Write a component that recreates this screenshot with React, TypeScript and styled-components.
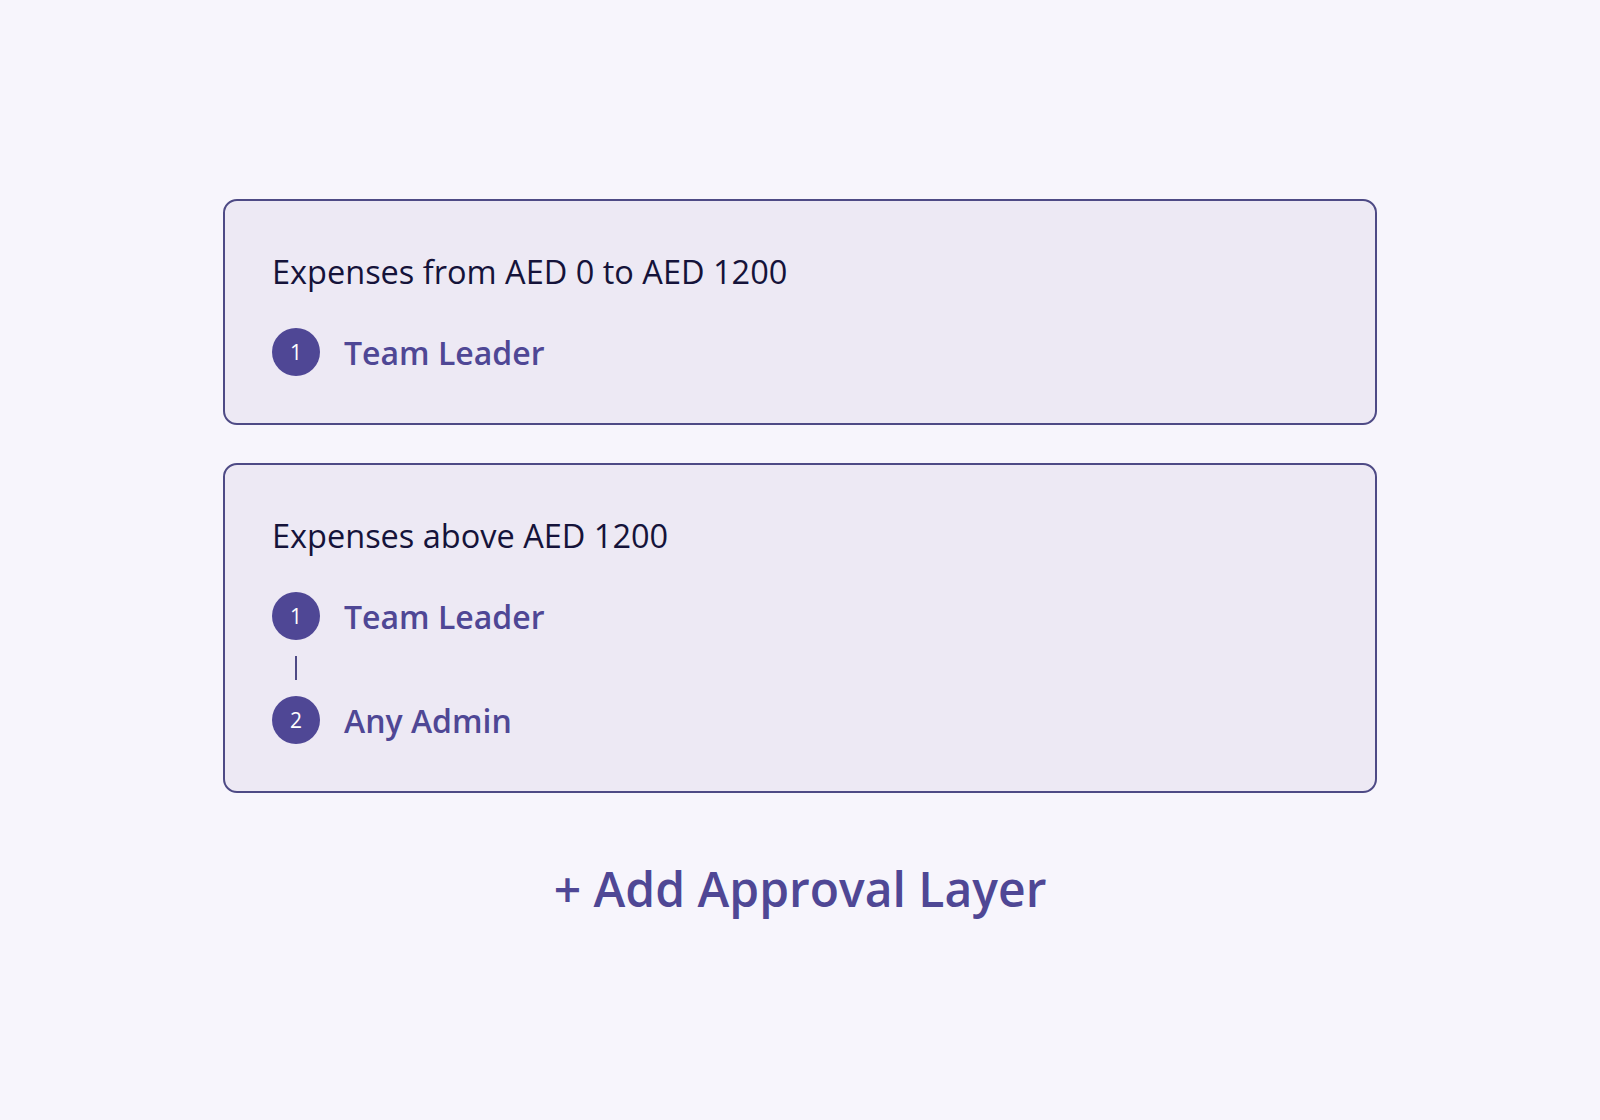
import styled, { createGlobalStyle } from "styled-components";

const GlobalStyle = createGlobalStyle`
	html, body {
		margin: 0;
		padding: 0;
		background: #f7f5fc;
	}

	body {
		font-family: "Open Sans", "Noto Sans", sans-serif;
	}
`;

const Page = styled.div`
	align-items: center;
	box-sizing: border-box;
	display: flex;
	flex-direction: column;
	min-height: 1120px;
	padding-top: 199px;
`;

const LayerList = styled.div`
	display: flex;
	flex-direction: column;
	gap: 38px;
	width: 1154px;
`;

const LayerCard = styled.div`
	background: #ede9f4;
	border: 2px solid #4e4a85;
	border-radius: 14px;
	box-sizing: border-box;
	display: flex;
	flex-direction: column;
	gap: 32px;
	padding: 47px 47px;
`;

const LayerTitle = styled.h3`
	color: #15133a;
	font-size: 32.5px;
	font-weight: 400;
	line-height: 48px;
	margin: 0;
`;

const Steps = styled.ol`
	display: flex;
	flex-direction: column;
	list-style: none;
	margin: 0;
	padding: 0;
`;

const Step = styled.li`
	align-items: center;
	display: flex;
	gap: 24px;
	height: 48px;
`;

const StepNumber = styled.span`
	align-items: center;
	background: #4f4795;
	border-radius: 50%;
	color: #ffffff;
	display: flex;
	flex-shrink: 0;
	font-size: 21px;
	height: 48px;
	justify-content: center;
	width: 48px;
`;

const StepName = styled.span`
	color: #4f4795;
	font-size: 32px;
	font-weight: 600;
`;

const Connector = styled.div`
	background: #4e4a85;
	height: 24px;
	margin: 16px 0 16px 23px;
	width: 2px;
`;

const AddButton = styled.button`
	background: none;
	border: none;
	color: #4f4795;
	cursor: pointer;
	font-family: inherit;
	font-size: 48px;
	font-weight: 600;
	line-height: 64px;
	margin-top: 64px;
	padding: 0;
`;

interface Layer {
	title: string;
	approvers: string[];
}

const layers: Layer[] = [
	{ title: "Expenses from AED 0 to AED 1200", approvers: ["Team Leader"] },
	{ title: "Expenses above AED 1200", approvers: ["Team Leader", "Any Admin"] },
];

function ApprovalLayer({ layer }: { layer: Layer }) {
	return (
		<LayerCard>
			<LayerTitle>{layer.title}</LayerTitle>
			<Steps>
				{layer.approvers.map((name, i) => (
					<div key={name + i}>
						{i > 0 && <Connector />}
						<Step>
							<StepNumber>{i + 1}</StepNumber>
							<StepName>{name}</StepName>
						</Step>
					</div>
				))}
			</Steps>
		</LayerCard>
	);
}

export default function App() {
	return (
		<>
			<GlobalStyle />
			<Page>
				<LayerList>
					{layers.map((layer) => (
						<ApprovalLayer key={layer.title} layer={layer} />
					))}
				</LayerList>
				<AddButton>+ Add Approval Layer</AddButton>
			</Page>
		</>
	);
}
